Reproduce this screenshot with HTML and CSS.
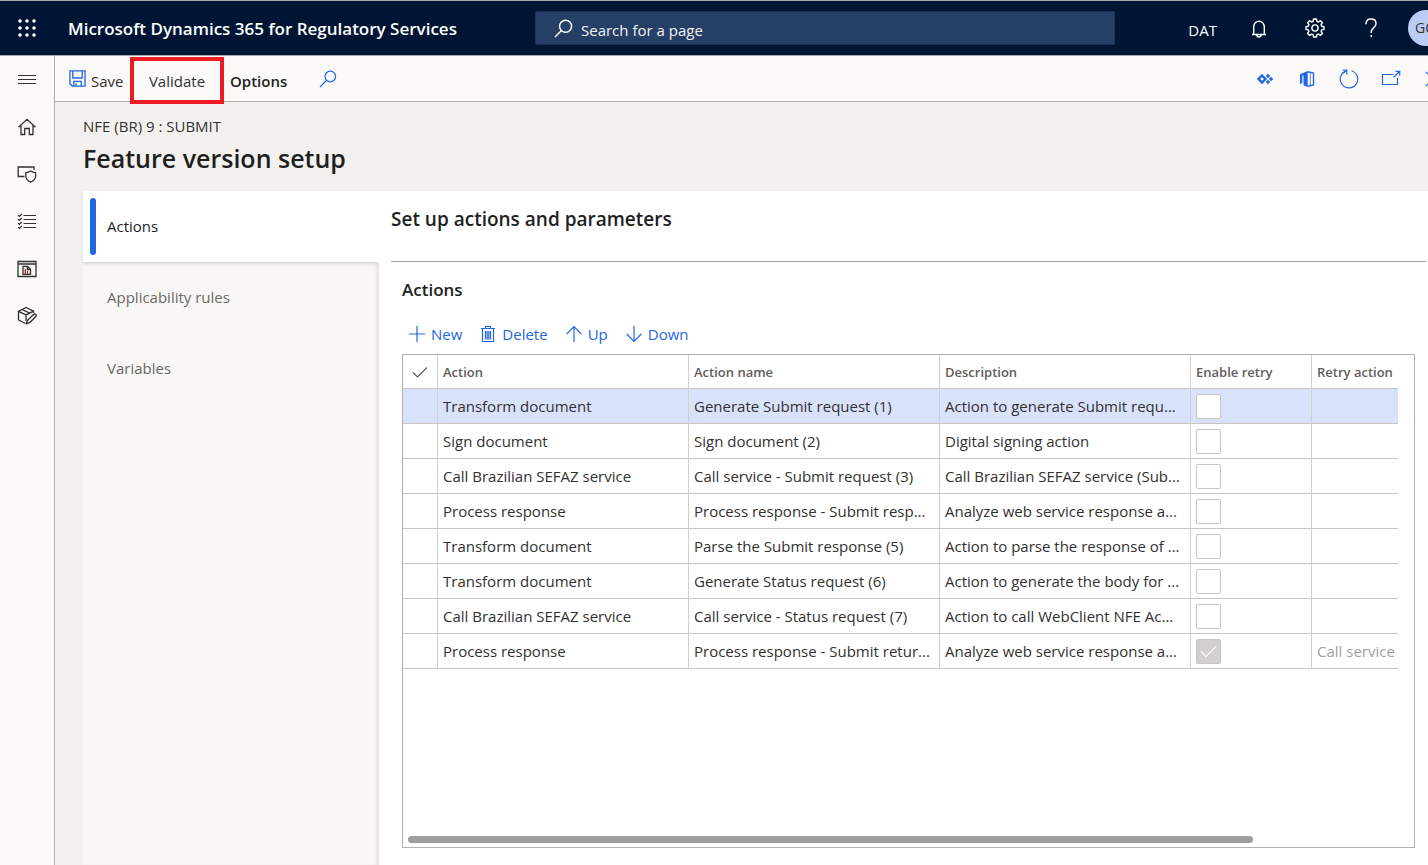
FILE: index.html
```html
<!DOCTYPE html>
<html lang="en">
<head>
<meta charset="utf-8">
<title>Feature version setup</title>
<link rel="stylesheet" href="styles.css">
</head>
<body>
<div class="app">
  <header class="topbar">
    <button class="icon-btn waffle" aria-label="App launcher">
      <svg width="20" height="20" viewBox="0 0 20 20" fill="currentColor"><circle cx="3" cy="3" r="1.800"/><circle cx="10" cy="3" r="1.800"/><circle cx="17" cy="3" r="1.800"/><circle cx="3" cy="10" r="1.800"/><circle cx="10" cy="10" r="1.800"/><circle cx="17" cy="10" r="1.800"/><circle cx="3" cy="17" r="1.800"/><circle cx="10" cy="17" r="1.800"/><circle cx="17" cy="17" r="1.800"/></svg>
    </button>
    <span class="brand">Microsoft Dynamics 365 for Regulatory Services</span>
    <div class="search">
      <svg width="20" height="20" viewBox="0 0 20 20" fill="none" stroke="currentColor" stroke-width="1.4"><circle cx="12.6" cy="8.2" r="6"/><path d="M8.4 12.6L2 19"/></svg>
      <input class="search-input" type="text" placeholder="Search for a page" aria-label="Search for a page">
    </div>
    <div class="top-actions">
      <span class="company">DAT</span>
      <button class="icon-btn" aria-label="Notifications">
        <svg width="20" height="20" viewBox="0 0 20 20" fill="none" stroke="currentColor" stroke-width="1.4"><path d="M4.7 16.500V9a5.3 5.8 0 0 1 10.6 0v7.5M3 16.500h14M7.8 16.800a2.2 2.2 0 0 0 4.4 0"/></svg>
      </button>
      <button class="icon-btn" aria-label="Settings">
        <svg width="20" height="20" viewBox="0 0 20 20" fill="none" stroke="currentColor" stroke-width="1.4" stroke-linejoin="round"><path d="M8.6 1h2.8l.5 2.4 1.5.6 2-1.3 2 2-1.3 2 .6 1.5 2.3.5v2.7l-2.3.5-.6 1.5 1.3 2-2 2-2-1.3-1.5.6-.5 2.3H8.6l-.5-2.3-1.5-.6-2 1.3-2-2 1.3-2-.6-1.5L1 11.4V8.7l2.3-.5.6-1.5-1.3-2 2-2 2 1.3 1.5-.6z"/><circle cx="10" cy="10" r="3.1"/></svg>
      </button>
      <button class="icon-btn" aria-label="Help">
        <svg width="20" height="20" viewBox="0 0 20 20" fill="none" stroke="currentColor" stroke-width="1.5"><path d="M5 6.2C5 3 7 1 10 1s5 1.900 5 4.700c0 3.800-4.800 4.300-4.800 8.300v1M10.200 17v2"/></svg>
      </button>
      <button class="avatar" aria-label="Account">GC</button>
    </div>
  </header>

  <div class="body">
    <nav class="rail" aria-label="Main navigation">
      <button class="icon-btn" aria-label="Expand navigation"><svg width="20" height="20" viewBox="0 0 20 20" fill="none" stroke="currentColor" stroke-width="1"><path d="M1 5.500h18M1 9.500h18M1 13.500h18"/></svg></button>
      <button class="icon-btn" aria-label="Home"><svg width="20" height="20" viewBox="0 0 20 20" fill="none" stroke="currentColor" stroke-width="1.3"><path d="M1.500 10.300L10 2.300l8.500 8M4 8.500v9h3.700v-6h4.600v6H16v-9"/></svg></button>
      <button class="icon-btn" aria-label="Security"><svg width="20" height="20" viewBox="0 0 20 20" fill="none" stroke="currentColor" stroke-width="1.3"><path d="M7.500 12.500H1.200V3H17v3"/><path d="M13.700 7c1.500 1.100 3 1.500 4.900 1.600v3.300c0 2.900-1.900 4.800-4.900 6.200-3-1.400-4.900-3.300-4.900-6.200V8.600c1.900-.1 3.400-.5 4.900-1.600z"/></svg></button>
      <button class="icon-btn" aria-label="Modules"><svg width="20" height="20" viewBox="0 0 20 20" fill="none" stroke="currentColor" stroke-width="1.200"><path d="M6.500 4.500H19M6.500 8.500H19M6.500 12.500H19M6.500 16.500H19M1 4.200l1.300 1.300L4.800 3M1 8.200l1.300 1.300L4.800 7M1 12.200l1.300 1.300L4.800 11M1 16.200l1.300 1.300L4.800 15"/></svg></button>
      <button class="icon-btn" aria-label="Reports"><svg width="20" height="20" viewBox="0 0 20 20" fill="none" stroke="currentColor" stroke-width="1.300"><path d="M1 3.500h18v15H1zM1 6h18"/><path d="M6 8.300h4.500l3 3v5H6zM10.300 8.300v3.200h3.200"/><path d="M8.300 11v5M10.500 13v3" stroke="#a4262c"/></svg></button>
      <button class="icon-btn" aria-label="Products"><svg width="20" height="20" viewBox="0 0 20 20" fill="none" stroke="currentColor" stroke-width="1.300" stroke-linejoin="round"><path d="M8.500 18.500L1.500 15V6.300L9 2.500l7.500 3.600v2M1.500 6.300L9 9.800l7.500-3.700M9 9.800V16M5.200 4.500l7.500 3.600"/><path d="M9.300 18.800l1-3.300 6.200-6a1.500 1.500 0 0 1 2.200 2.200l-6.200 6z"/></svg></button>
    </nav>

    <main class="main">
      <div class="toolbar">
        <button class="cmd save">
          <svg class="blue" width="17" height="17" viewBox="0 0 18 18" fill="none" stroke="currentColor" stroke-width="1.400"><path d="M1 1h16v16H3.500L1 14.500zM4 1v7.500h10V1M5 17v-5h8v5M7.500 17v-3"/></svg>
          Save</button>
        <div class="callout"><button class="cmd">Validate</button></div>
        <button class="cmd options">Options</button>
        <button class="icon-btn find" aria-label="Search actions"><svg width="18" height="18" viewBox="0 0 18 18" fill="none" stroke="currentColor" stroke-width="1.200"><circle cx="11.300" cy="6.500" r="5.300"/><path d="M7.500 10.300L1 17"/></svg></button>
        <div class="tool-icons">
          <button class="icon-btn" aria-label="Power Apps"><svg width="18" height="18" viewBox="0 0 18 18" fill="none" stroke="currentColor"><path d="M6 5.500L9.500 9 6 12.500 2.500 9z" stroke-width="2.400"/><path d="M12 3.700L14.200 6 12 8.200 9.800 6zM15 6.700L17.300 9 15 11.200 12.800 9zM12 9.800l2.200 2.200-2.200 2.300L9.800 12z" fill="currentColor" stroke="none"/></svg></button>
          <button class="icon-btn" aria-label="Open in Microsoft Office"><svg width="18" height="18" viewBox="0 0 18 18"><path d="M2 4.300L9.700 1v16L5.500 15.300V5.200L4.300 5.700v7.300L2 14.300z" fill="currentColor"/><path d="M9.500 1.700l6 1.300v12l-6 1.300" fill="none" stroke="currentColor" stroke-width="1.400"/><path d="M12.300 2.500v13" stroke="currentColor" stroke-width=".7"/></svg></button>
          <button class="icon-btn" aria-label="Refresh"><svg width="20" height="20" viewBox="0 0 20 20" fill="none" stroke="currentColor" stroke-width="1.200"><path d="M12.500 1.800a8.700 8.700 0 1 1-5.300.1M3.500 1h4.300v4.500M7.800 1L4.600 4.200"/></svg></button>
          <button class="icon-btn" aria-label="Open in new window"><svg width="20" height="20" viewBox="0 0 20 20" fill="none" stroke="currentColor" stroke-width="1.200"><path d="M12.500 5.500H1.500v10h15V9M12.500 8.500l6-6M14.500 2.300h4.200v4.200"/></svg></button>
          <button class="icon-btn" aria-label="Close"><svg width="20" height="20" viewBox="0 0 20 20" fill="none" stroke="currentColor" stroke-width="1.200"><path d="M3 3l14 14M17 3L3 17"/></svg></button>
        </div>
      </div>

      <div class="heading">
        <div class="crumb">NFE (BR) 9 : SUBMIT</div>
        <h1 class="title">Feature version setup</h1>
      </div>

      <div class="content">
        <div class="tabs" role="tablist">
          <button class="tab active" role="tab" aria-selected="true">Actions</button>
          <button class="tab" role="tab" aria-selected="false">Applicability rules</button>
          <button class="tab" role="tab" aria-selected="false">Variables</button>
        </div>
        <section class="panel">
          <h2 class="panel-title">Set up actions and parameters</h2>
          <div class="group">
            <h3 class="group-title">Actions</h3>
            <div class="grid-actions">
              <button class="cmd"><svg width="18" height="18" viewBox="0 0 18 18" fill="none" stroke="currentColor" stroke-width="1.200"><path d="M9 1v16M1 9h16"/></svg>New</button>
              <button class="cmd"><svg width="18" height="18" viewBox="0 0 18 18" fill="none" stroke="currentColor" stroke-width="1.200"><path d="M3.500 3.500v13h11v-13M2 3.500h14M6.500 3.500v-2h5v2"/><path d="M6.500 6v8.500M8.200 6v8.500M9.800 6v8.500M11.500 6v8.500"/></svg>Delete</button>
              <button class="cmd"><svg width="18" height="18" viewBox="0 0 18 18" fill="none" stroke="currentColor" stroke-width="1.200"><path d="M9 17V2M1.700 9L9 1.700 16.300 9"/></svg>Up</button>
              <button class="cmd"><svg width="18" height="18" viewBox="0 0 18 18" fill="none" stroke="currentColor" stroke-width="1.200"><path d="M9 1v15M1.700 9L9 16.300 16.300 9"/></svg>Down</button>
            </div>
            <div class="grid">
              <table class="table">
                <colgroup><col class="c-mark"><col class="c-text"><col class="c-text"><col class="c-text"><col class="c-retry"><col></colgroup>
                <thead><tr>
                  <th class="mark"><svg width="16" height="16" viewBox="0 0 16 16" fill="none" stroke="currentColor" stroke-width="1.200"><path d="M1 8.500l4.500 4.500L15 3.500"/></svg></th>
                  <th>Action</th><th>Action name</th><th>Description</th><th>Enable retry</th><th>Retry action</th>
                </tr></thead>
                <tbody>
                  <tr class="selected"><td></td><td>Transform document</td><td>Generate Submit request (1)</td><td>Action to generate Submit requ...</td><td><input class="box" type="checkbox" aria-label="Enable retry 1"></td><td></td></tr>
                  <tr><td></td><td>Sign document</td><td>Sign document (2)</td><td>Digital signing action</td><td><input class="box" type="checkbox" aria-label="Enable retry 2"></td><td></td></tr>
                  <tr><td></td><td>Call Brazilian SEFAZ service</td><td>Call service - Submit request (3)</td><td>Call Brazilian SEFAZ service (Sub...</td><td><input class="box" type="checkbox" aria-label="Enable retry 3"></td><td></td></tr>
                  <tr><td></td><td>Process response</td><td>Process response - Submit resp...</td><td>Analyze web service response a...</td><td><input class="box" type="checkbox" aria-label="Enable retry 4"></td><td></td></tr>
                  <tr><td></td><td>Transform document</td><td>Parse the Submit response (5)</td><td>Action to parse the response of ...</td><td><input class="box" type="checkbox" aria-label="Enable retry 5"></td><td></td></tr>
                  <tr><td></td><td>Transform document</td><td>Generate Status request (6)</td><td>Action to generate the body for ...</td><td><input class="box" type="checkbox" aria-label="Enable retry 6"></td><td></td></tr>
                  <tr><td></td><td>Call Brazilian SEFAZ service</td><td>Call service - Status request (7)</td><td>Action to call WebClient NFE Ac...</td><td><input class="box" type="checkbox" aria-label="Enable retry 7"></td><td></td></tr>
                  <tr><td></td><td>Process response</td><td>Process response - Submit retur...</td><td>Analyze web service response a...</td><td><input class="box" type="checkbox" aria-label="Enable retry 8" checked disabled></td><td class="muted">Call service</td></tr>
                </tbody>
              </table>
              <div class="scrollbar"><div class="thumb"></div></div>
            </div>
          </div>
        </section>
      </div>
    </main>
  </div>
</div>
</body>
</html>
```

FILE: styles.css
```css
* { box-sizing: border-box; }
body {
  margin: 0;
  font: 15px/20px "Open Sans", "Noto Sans", sans-serif;
  color: #323130;
  background: #f2f1f0;
}
button {
  font: inherit;
  color: inherit;
  background: none;
  border: 0;
  padding: 0;
  cursor: pointer;
}
svg { display: block; flex: none; }
h1, h2, h3 { margin: 0; font-weight: 600; color: #201f1e; }

.app { display: flex; flex-direction: column; min-height: 100vh; overflow: hidden; }
.icon-btn { display: flex; align-items: center; justify-content: center; flex: none; }

.topbar {
  display: grid;
  grid-template-columns: 54px 481px minmax(200px, 580px) 1fr;
  align-items: center;
  height: 56px;
  background: #001433;
  border-top: 1px solid #a9adb0;
  border-bottom: 1px solid #a3abb9;
  color: #fff;
}
.waffle { color: #fff; }
.brand { padding: 2px 0 0 14px; font-size: 17px; font-weight: 600; white-space: nowrap; }
.search {
  display: flex;
  align-items: center;
  gap: 8px;
  height: 34px;
  padding: 0 17px;
  background: #263f66;
  border: 1px solid #1d3558;
  border-radius: 2px;
}
.search-input {
  flex: 1;
  min-width: 0;
  padding: 4px 0 0;
  border: 0;
  outline: 0;
  background: none;
  color: #fff;
  font: inherit;
}
.search-input::placeholder { color: #f3f2f1; opacity: 1; }
.top-actions { display: flex; align-items: center; justify-content: flex-end; gap: 36px; margin-right: -16px; }
.company { padding-top: 4px; margin-right: -4px; }
.avatar {
  width: 36px;
  height: 36px;
  margin-left: -9px;
  padding-left: 7px;
  border-radius: 50%;
  background: #bccdf5;
  color: #323130;
  font-size: 14px;
  text-align: left;
  flex: none;
}

.body { display: flex; flex: 1; }
.rail {
  display: flex;
  flex-direction: column;
  width: 55px;
  flex: none;
  background: #faf9f8;
  border-right: 1px solid #b3b0ad;
}
.rail .icon-btn { height: 47px; }
.main { display: flex; flex-direction: column; flex: 1; min-width: 0; }

.toolbar {
  display: flex;
  align-items: center;
  height: 46px;
  padding: 4px 0 0 14px;
  background: #faf9f8;
  border-bottom: 1px solid #b3b0ad;
}
.toolbar svg { margin-bottom: 4px; }
.cmd { display: flex; align-items: center; gap: 5px; white-space: nowrap; }
.save { width: 61px; }
.blue, .find, .tool-icons, .grid-actions { color: #2266e3; }
.callout {
  z-index: 1;
  display: flex;
  align-items: center;
  justify-content: center;
  flex: none;
  width: 94px;
  height: 47px;
  border: 4px solid #ed1c24;
}
.options { padding: 0 32px 0 6px; font-weight: 600; color: #201f1e; }
.tool-icons { display: flex; align-items: center; gap: 22px; margin: 0 -15px 0 auto; }
.tool-icons .icon-btn { width: 20px; }

.heading { padding: 14px 28px 15px; }
.crumb { line-height: 20px; }
.title { padding-top: 5px; font-size: 25px; line-height: 35px; }

.content { display: flex; flex: 1; padding-left: 28px; }
.tabs { display: flex; flex-direction: column; width: 296px; flex: none; background: #f8f7f6; box-shadow: inset -4px 0 4px -3px #d8d6d4; }
.tab { height: 71px; padding: 0 0 2px 24px; text-align: left; color: #6b6966; }
.tab.active {
  position: relative;
  background: #fff;
  color: #201f1e;
  box-shadow: 0 2px 3px #d8d6d4;
}
.tab.active::before {
  content: "";
  position: absolute;
  left: 7px;
  top: 7px;
  bottom: 7px;
  width: 6px;
  border-radius: 3px;
  background: #2266e3;
}
.panel {
  position: relative;
  display: flex;
  flex-direction: column;
  flex: 1;
  min-width: 0;
  padding-left: 12px;
  background: #fff;
}
.panel-title {
  height: 71px;
  margin-right: 2px;
  padding-top: 14px;
  border-bottom: 1px solid #a19f9d;
  font-size: 19px;
  line-height: 28px;
}
.group { display: flex; flex-direction: column; flex: 1; padding: 16px 13px 17px 11px; }
.group-title { font-size: 17px; line-height: 24px; }
.grid-actions { display: flex; gap: 17px; height: 52px; padding: 12px 0 0 6px; }
.grid {
  display: flex;
  flex-direction: column;
  flex: 1;
  border: 1px solid #b3b0ad;
}
.table {
  width: calc(100% - 16px);
  table-layout: fixed;
  border-collapse: separate;
  border-spacing: 0;
  white-space: nowrap;
}
.c-mark { width: 35px; }
.c-text { width: 251px; }
.c-retry { width: 121px; }
.table th, .table td {
  height: 35px;
  padding: 0 0 0 5px;
  border-right: 1px solid #d2d0ce;
  border-bottom: 1px solid #c8c6c4;
  overflow: hidden;
  text-align: left;
}
.table th { height: 34px; font-size: 13px; font-weight: 600; color: #605e5c; }
.table th:last-child, .table td:last-child { border-right: 0; }
.table .mark { padding-left: 9px; }
.table .muted { color: #a19f9d; }
.selected { background: #d8e3fb; }
.box {
  appearance: none;
  display: grid;
  place-items: center;
  width: 25px;
  height: 25px;
  margin: 0;
  border: 1px solid #c8c6c4;
  border-radius: 2px;
  background: #fff;
}
.box:checked { background: #d2d0ce; }
.box:checked::before {
  content: "";
  width: 14px;
  height: 7px;
  margin-bottom: 5px;
  border: solid #fff;
  border-width: 0 0 1px 1px;
  transform: rotate(-45deg);
}
.scrollbar { margin-top: auto; padding: 0 0 4px 5px; }
.thumb { width: 84%; height: 7px; border-radius: 4px; background: #a19f9d; }
```
